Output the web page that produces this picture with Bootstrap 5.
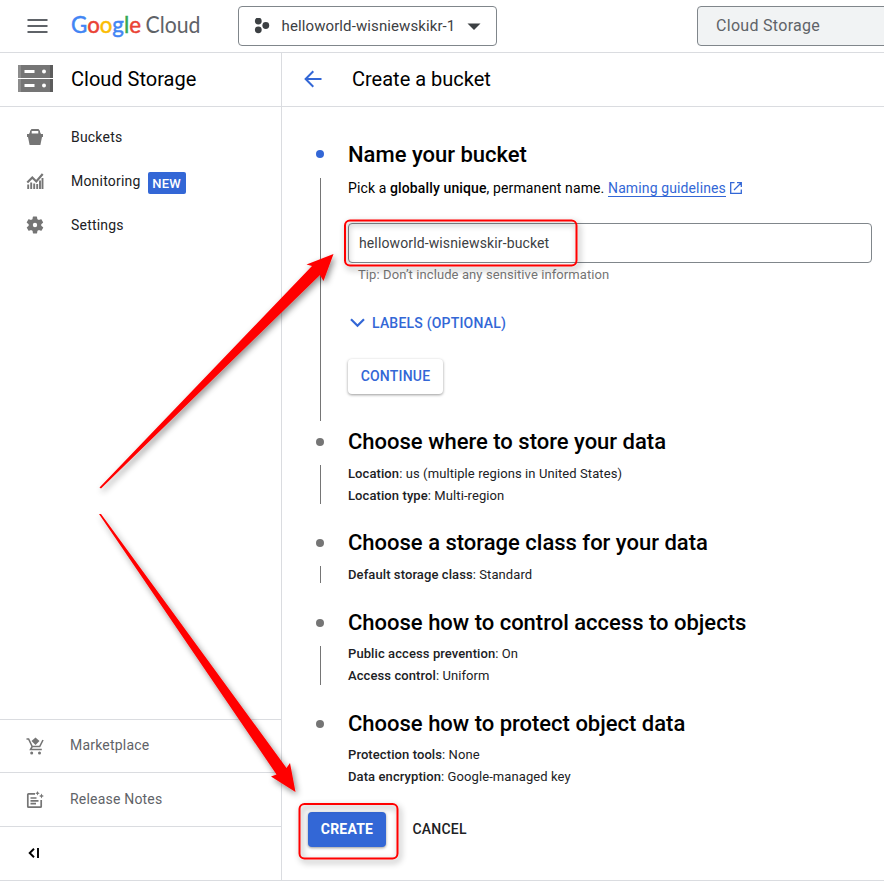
<!DOCTYPE html>
<html lang="en">
<head>
<meta charset="utf-8">
<meta name="viewport" content="width=device-width, initial-scale=1">
<title>Create a bucket – Cloud Storage</title>
<link href="https://cdn.jsdelivr.net/npm/bootstrap@5.3.0/dist/css/bootstrap.min.css" rel="stylesheet">
<style>
:root{--gc-blue:#3367d6;--gc-line:#dadce0;--gc-grey:#757575}
body{font-family:Roboto,"Liberation Sans",sans-serif;font-size:14px;line-height:20px;color:#000;background:#fff}
.console{width:884px;height:882px}
.shell{height:881px;border-bottom:1px solid var(--gc-line)}
.topbar{height:53px;border-bottom:1px solid var(--gc-line);padding-left:26px}
.logo{margin-left:21px;overflow:visible}
.project{width:259px;height:40px;margin-left:36px;border:1px solid #80868b;border-radius:4px;padding:0 15px;color:#3c4043;font-size:15px;letter-spacing:.1px}
.search{width:220px;height:40px;margin-left:200px;border:1px solid #80868b;border-radius:4px;background:#f1f3f4;color:#5f6368;font-size:16px;padding-left:18px;letter-spacing:.3px}
.side{width:282px;border-right:1px solid var(--gc-line)}
.titlebar{height:54px;border-bottom:1px solid var(--gc-line);font-size:20px;letter-spacing:0;padding-bottom:2px}
.side .titlebar{padding-left:18px}
.side .titlebar span{margin-left:18px}
.side-link{height:44px;padding-left:26px;color:#202124;letter-spacing:.2px}
.side-link span:first-of-type{margin-left:27px}
.tag-new{background:var(--gc-blue);color:#fff;font-size:13px;font-weight:500;width:38px;height:22px;border-radius:2px;margin:4px 0 0 7px;padding-top:1px;letter-spacing:.1px}
.foot-link{height:54px;border-top:1px solid var(--gc-line);padding-left:26px;color:#5f6368;letter-spacing:.2px}
.foot-link:first-child{height:53px}
.foot-link span{margin-left:26px;margin-bottom:2px}
.foot-link:last-child{padding-bottom:1px}
.main .titlebar{padding-left:22px}
.main .titlebar span{margin-left:30px}
.steps{padding:30px 12px 0 34px}
.step{display:grid;grid-template-columns:8px 1fr;column-gap:24px;margin-bottom:18px}
.step-title{height:34px;margin:0 0 5px;font-size:22px;line-height:36px;font-weight:500}
.dot{width:8px;height:8px;border-radius:50%;background:var(--gc-grey);margin-top:14px}
.dot.current{background:var(--gc-blue);margin-top:13px}
.rail{width:1px;background:var(--gc-grey);margin:2px 0 3px 4px}
.step-late{margin-top:19px}
.step-late .step-title{margin-bottom:4px}
.step-late .rail{margin:3px 0 2px 4px}
.facts{font-size:13px;line-height:22px;color:#202124;letter-spacing:.09px}
.facts b,.intro b{font-weight:500}
.first-body{height:248px}
.intro{margin-top:2px;letter-spacing:.12px}
.guide{color:var(--gc-blue);text-decoration:none;border-bottom:1px solid var(--gc-blue)}
.name-input{height:40px;border:1px solid #80868b;border-radius:4px;padding:0 10px;font-size:14px;color:#3c4043;margin-top:25px;letter-spacing:.12px}
.tip{font-size:13px;line-height:20px;color:#757575;margin:2px 0 0 10px;letter-spacing:.09px}
.labels{color:var(--gc-blue);font-weight:500;margin:28px 0 0 2px;letter-spacing:.2px}
.labels span{margin-left:7px}
.btn-gc{height:35px;border-radius:4px;border:0;font-size:14px;font-weight:500;padding:0 12.5px;letter-spacing:.2px;color:var(--gc-blue);background:#fff;box-shadow:0 1px 3px rgba(0,0,0,.4)}
.btn-continue{margin-top:26px;width:95px}
.btn-create{background:var(--gc-blue);color:#fff;width:78px;font-weight:700}
.btn-cancel{box-shadow:none;color:#202124;margin-left:14px}
.actions{padding-left:26px}
.marks{left:0;top:0;pointer-events:none}
</style>
<script src="https://cdn.jsdelivr.net/npm/bootstrap@5.3.0/dist/js/bootstrap.bundle.min.js"></script>
</head>
<body>
<div class="console position-relative overflow-hidden">
<div class="shell d-flex flex-column overflow-hidden">
  <header class="topbar d-flex align-items-center flex-shrink-0">
    <svg class="flex-shrink-0" width="23" height="16" viewBox="0 0 23 16"><path d="M1.500 2h20M1.500 8h20M1.500 14h20" stroke="#5f6368" stroke-width="2"/></svg>
    <svg class="logo flex-shrink-0" width="132" height="36" viewBox="0 0 132 36" font-family="Lato, sans-serif" font-size="24">
      <text y="25" x="1" textLength="70" lengthAdjust="spacingAndGlyphs" stroke-width=".5"><tspan fill="#4285f4" stroke="#4285f4">G</tspan><tspan fill="#ea4335" stroke="#ea4335">o</tspan><tspan fill="#fbbc04" stroke="#fbbc04">o</tspan><tspan fill="#4285f4" stroke="#4285f4">g</tspan><tspan fill="#34a853" stroke="#34a853">l</tspan><tspan fill="#ea4335" stroke="#ea4335">e</tspan></text>
      <text y="25" x="75.500" textLength="55" lengthAdjust="spacingAndGlyphs" font-size="23" fill="#5f6368">Cloud</text>
    </svg>
    <div class="project d-flex align-items-center flex-shrink-0">
      <svg width="16" height="16" viewBox="0 0 16 16" fill="#3c4043"><circle cx="4.300" cy="3" r="3.400"/><circle cx="4.300" cy="11.800" r="3.400"/><circle cx="11.800" cy="7.500" r="3.400"/></svg>
      <span class="mx-auto">helloworld-wisniewskikr-1</span>
      <svg width="14" height="7" viewBox="0 0 14 7"><path d="M.5.500h13L7 7z" fill="#3c4043"/></svg>
    </div>
    <div class="search d-flex align-items-center flex-shrink-0">Cloud Storage</div>
  </header>
  <div class="d-flex flex-grow-1">
    <nav class="side d-flex flex-column flex-shrink-0">
      <div class="titlebar d-flex align-items-center">
        <svg width="35" height="27" viewBox="0 0 35 27"><path d="M0 0h35v13H0zM0 14h35v13H0z" fill="#757575"/><path d="M0 0h3v13H0zM0 14h3v13H0z" fill="#8c8c8c"/><path d="M32 0h3v13h-3zM32 14h3v13h-3z" fill="#5c5c5c"/><path d="M6.500 5h10v3h-10zM6.500 19h10v3h-10z" fill="#fff"/><circle cx="26" cy="6.500" r="2" fill="#fff"/><circle cx="26" cy="20.500" r="2" fill="#fff"/></svg>
        <span>Cloud Storage</span>
      </div>
      <div class="pt-2">
        <div class="side-link d-flex align-items-center">
          <svg width="18" height="18" viewBox="0 0 18 18"><path d="M1 6h16v3h-1l-1.600 8H3.600L2 9H1zM3 6l1-2V3l1.500-2h7L14 3v1l1 2z" fill="#757575"/><path d="M5.700 3h6.600v2.500H5.700z" fill="#fff"/></svg>
          <span>Buckets</span>
        </div>
        <div class="side-link d-flex align-items-center">
          <svg width="18" height="18" viewBox="0 0 18 18" fill="none" stroke="#757575"><path d="M1.300 10.500l5-5 4 4L16.700 2" stroke-width="2.200"/><path d="M2.200 12.500V17M5.200 10.500V17M8.200 11.500V17M11.200 12V17M14 8.500V17M16.500 6V17" stroke-width="1.900"/></svg>
          <span>Monitoring</span><span class="tag-new d-flex align-items-center justify-content-center">NEW</span>
        </div>
        <div class="side-link d-flex align-items-center">
          <svg width="18" height="18" viewBox="1.300 1.300 21.400 21.400"><path fill="#757575" d="M19.400 13a7.500 7.500 0 0 0 0-2l2.100-1.600a.5.500 0 0 0 .1-.6l-2-3.500a.5.500 0 0 0-.6-.2l-2.500 1a7.300 7.300 0 0 0-1.700-1l-.4-2.600a.5.500 0 0 0-.5-.5h-4a.5.500 0 0 0-.5.500L9 5.100a7.700 7.700 0 0 0-1.700 1l-2.500-1a.5.500 0 0 0-.6.200l-2 3.500a.5.500 0 0 0 .1.600L4.500 11a8 8 0 0 0 0 2l-2.100 1.600a.5.500 0 0 0-.1.600l2 3.500c.1.200.4.300.6.200l2.500-1a7.300 7.300 0 0 0 1.700 1l.4 2.600c0 .2.200.5.500.5h4c.2 0 .5-.2.500-.5l.4-2.600a7.700 7.700 0 0 0 1.700-1l2.500 1c.2.100.5 0 .6-.2l2-3.500a.5.500 0 0 0-.1-.6zM12 14.600a2.600 2.600 0 1 1 0-5.200 2.600 2.600 0 0 1 0 5.200z"/></svg>
          <span>Settings</span>
        </div>
      </div>
      <div class="mt-auto">
        <div class="foot-link d-flex align-items-center">
          <svg width="18" height="18" viewBox="0 0 18 18" fill="none" stroke="#757575" stroke-width="1.600"><path d="M.5 2h2.100l3.600 7.500h7.500L17 3M6.200 9.500l-1.600 3h11.200"/><path d="M9.500.500l4 3.500-4 4-4-4z" fill="#757575" stroke="none"/><circle cx="5.700" cy="16" r="1.500" fill="#757575" stroke="none"/><circle cx="13.500" cy="16" r="1.500" fill="#757575" stroke="none"/></svg>
          <span>Marketplace</span>
        </div>
        <div class="foot-link d-flex align-items-center">
          <svg width="18" height="18" viewBox="0 0 18 18" fill="none" stroke="#757575" stroke-width="1.700"><path d="M9 2.800H2.500Q1.800 2.800 1.800 3.500v12q0 .7.7.700h12q.7 0 .7-.7V9"/><path d="M4.500 7h6M4.500 9.800h8M4.500 12.600h5.500"/><path d="M11.500 0l.7 1.500 1.500.7-1.500.7-.7 1.500-.7-1.500-1.500-.7 1.500-.7zM15.500 2.500l.8 1.700 1.700.8-1.700.8-.8 1.700-.8-1.700L13 5l1.700-.8z" fill="#757575" stroke="none"/></svg>
          <span>Release Notes</span>
        </div>
        <div class="foot-link d-flex align-items-center">
          <svg width="18" height="12" viewBox="0 0 18 12" fill="none" stroke="#000" stroke-width="1.900"><path d="M8 1.800L3.700 6 8 10.200M12 1v10"/></svg>
        </div>
      </div>
    </nav>
    <main class="main flex-grow-1">
      <div class="titlebar d-flex align-items-center">
        <svg width="18" height="18" viewBox="0 0 18 18" fill="none" stroke="#3367d6" stroke-width="2"><path d="M17.500 9H2M9.300 1.300L1.600 9l7.700 7.700"/></svg>
        <span>Create a bucket</span>
      </div>
      <div class="steps">
        <section class="step mb-0">
          <i class="dot current"></i><h2 class="step-title">Name your bucket</h2>
          <i class="rail"></i>
          <div class="first-body">
            <div class="intro d-flex align-items-center"><span>Pick a <b>globally unique</b>, permanent name. <a class="guide" href="#">Naming guidelines</a></span>
              <svg class="ms-1" width="12" height="12" viewBox="0 0 12 12" fill="none" stroke="#3367d6" stroke-width="1.300"><path d="M4.500.700H.700v10.600h10.600V7.500M7 .700h4.300V5M11 1L4 8"/></svg>
            </div>
            <div class="name-input d-flex align-items-center">helloworld-wisniewskir-bucket</div>
            <div class="tip">Tip: Don’t include any sensitive information</div>
            <div class="labels d-flex align-items-center"><svg width="15" height="10" viewBox="0 0 15 10" fill="none" stroke="#3367d6" stroke-width="2.200"><path d="M1 1.200L7.500 7.800 14 1.200"/></svg><span>LABELS (OPTIONAL)</span></div>
            <button class="btn btn-gc btn-continue">CONTINUE</button>
          </div>
        </section>
        <section class="step">
          <i class="dot"></i><h2 class="step-title">Choose where to store your data</h2>
          <i class="rail"></i>
          <div class="facts"><div><b>Location</b>: us (multiple regions in United States)</div><div><b>Location type</b>: Multi-region</div></div>
        </section>
        <section class="step">
          <i class="dot"></i><h2 class="step-title">Choose a storage class for your data</h2>
          <i class="rail"></i>
          <div class="facts"><b>Default storage class</b>: Standard</div>
        </section>
        <section class="step step-late">
          <i class="dot"></i><h2 class="step-title">Choose how to control access to objects</h2>
          <i class="rail"></i>
          <div class="facts"><div><b>Public access prevention</b>: On</div><div><b>Access control</b>: Uniform</div></div>
        </section>
        <section class="step step-late mb-0">
          <i class="dot"></i><h2 class="step-title">Choose how to protect object data</h2>
          <i></i>
          <div class="facts"><div><b>Protection tools</b>: None</div><div><b>Data encryption</b>: Google-managed key</div></div>
        </section>
      </div>
      <div class="actions d-flex mt-4"><button class="btn btn-gc btn-create">CREATE</button><button class="btn btn-gc btn-cancel">CANCEL</button></div>
    </main>
  </div>
</div>
<svg class="marks position-absolute" width="884" height="882" viewBox="0 0 884 882">
  <defs><filter id="shade" x="-20%" y="-20%" width="150%" height="150%"><feDropShadow dx="2" dy="3" stdDeviation="3" flood-color="#000" flood-opacity=".45"/></filter></defs>
  <g filter="url(#shade)">
    <path d="M99.500 487.500L312 266 306.500 264.500 333.500 254 323.500 281 320 275 101 488.500z" fill="#f00"/>
    <path d="M99 514L101 514 286.500 768 290 763 295.500 792 271 776.500 276.500 774.500z" fill="#f00"/>
    <rect x="345" y="220.500" width="231.500" height="45" rx="5" fill="none" stroke="#f00" stroke-width="2"/>
    <rect x="299.500" y="804" width="98" height="54.500" rx="5" fill="none" stroke="#f00" stroke-width="2"/>
  </g>
</svg>
</div>
</body>
</html>
